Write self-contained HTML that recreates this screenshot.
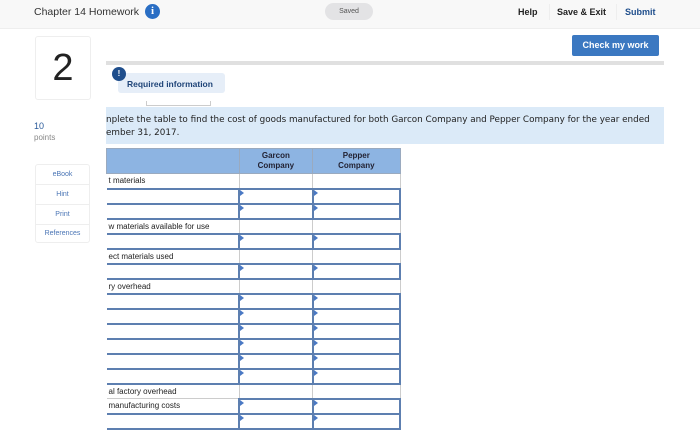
<!DOCTYPE html>
<html><head><meta charset="utf-8"><style>
*{margin:0;padding:0;box-sizing:border-box}
body{width:700px;height:438px;background:#fff;font-family:"Liberation Sans",Arial,sans-serif;position:relative;overflow:hidden;color:#333}
.a{position:absolute}
table{border-collapse:collapse;position:absolute;left:106px;top:148px;width:295px;font-size:8px}
td{height:15px;padding:0 0 0 2px;vertical-align:middle;color:#222;white-space:nowrap;overflow:hidden}
th{background:#8db4e2;height:25px;font-size:8px;color:#223;font-weight:bold;border:1px solid #9aaabf;line-height:10px}
tr.l td{border:1px solid #ccc}
tr td:first-child{border-left:none !important}
tr.i td{border-top:2px solid #5d7fb0;border-bottom:2px solid #5d7fb0}
tr.i td.c{border:2px solid #5d7fb0;position:relative}
tr.i td.c:before{content:"";position:absolute;left:0;top:0;border-left:4px solid #4a79c4;border-top:3px solid transparent;border-bottom:3px solid transparent}
</style></head><body>
<div class="a" style="left:0;top:0;width:700px;height:29px;background:#f8f8f8;border-bottom:1px solid #eee"></div>
<div class="a" style="left:34px;top:6px;font-size:10.5px;color:#333">Chapter 14 Homework</div>
<div class="a" style="left:145px;top:4px;width:15px;height:15px;border-radius:50%;background:#2a6ec4;color:#fff;font-weight:bold;font-size:11px;text-align:center;line-height:15px;font-family:'Liberation Serif',serif">i</div>
<div class="a" style="left:325px;top:3px;width:48px;height:17px;border-radius:9px;background:#e3e3e5;font-size:7px;color:#555;text-align:center;line-height:17px">Saved</div>
<div class="a" style="left:518px;top:7px;font-size:9px;font-weight:bold;color:#222">Help</div>
<div class="a" style="left:549px;top:4px;width:1px;height:16px;background:#eee"></div>
<div class="a" style="left:557px;top:7px;font-size:9px;font-weight:bold;color:#222">Save &amp; Exit</div>
<div class="a" style="left:616px;top:4px;width:1px;height:16px;background:#eee"></div>
<div class="a" style="left:625px;top:7px;font-size:9px;font-weight:bold;color:#1f4e8c">Submit</div>
<div class="a" style="left:572px;top:35px;width:87px;height:21px;background:#3b78c1;border-radius:2px;color:#fff;font-size:9px;font-weight:bold;text-align:center;line-height:21px">Check my work</div>
<div class="a" style="left:35px;top:36px;width:56px;height:64px;border:1px solid #eee;border-radius:3px;font-size:38px;text-align:center;line-height:62px;color:#222">2</div>
<div class="a" style="left:34px;top:121px;font-size:9px;color:#2a5a9a">10</div>
<div class="a" style="left:34px;top:133px;font-size:8px;color:#888">points</div>
<div class="a" style="left:35px;top:164px;width:55px;height:79px;border:1px solid #eee;border-radius:3px;font-size:7px;color:#4a75b5;text-align:center">
<div style="height:20px;line-height:20px;border-bottom:1px solid #eee">eBook</div>
<div style="height:20px;line-height:20px;border-bottom:1px solid #eee">Hint</div>
<div style="height:20px;line-height:20px;border-bottom:1px solid #eee">Print</div>
<div style="height:18px;line-height:18px">References</div></div>
<div class="a" style="left:106px;top:61px;width:558px;height:4px;background:#e0e0e0"></div>
<div class="a" style="left:118px;top:73px;width:107px;height:20px;background:#e6eef8;border-radius:3px;font-size:8.5px;font-weight:bold;color:#1f4478;padding:6px 0 0 9px">Required information</div>
<div class="a" style="left:112px;top:67px;width:14px;height:14px;border-radius:50%;background:#1f4e8c;color:#fff;font-size:8px;font-weight:bold;text-align:center;line-height:14px">!</div>
<div class="a" style="left:146px;top:101px;width:65px;height:5px;border:1px solid #ccc;border-top:none"></div>
<div class="a" style="left:106px;top:107px;width:558px;height:37px;background:#dbeaf8;color:#222;padding:7px 0 0 0;line-height:13px;font-family:'DejaVu Sans',sans-serif;font-size:8.8px;white-space:nowrap;overflow:hidden">nplete the table to find the cost of goods manufactured for both Garcon Company and Pepper Company for the year ended<br>ember 31, 2017.</div>
<table>
<tr><th style="width:133px"></th><th style="width:74px">Garcon<br>Company</th><th style="width:88px">Pepper<br>Company</th></tr>
<tr class="l"><td>t materials</td><td></td><td></td></tr>
<tr class="i"><td></td><td class="c"></td><td class="c"></td></tr>
<tr class="i"><td></td><td class="c"></td><td class="c"></td></tr>
<tr class="l"><td>w materials available for use</td><td></td><td></td></tr>
<tr class="i"><td></td><td class="c"></td><td class="c"></td></tr>
<tr class="l"><td>ect materials used</td><td></td><td></td></tr>
<tr class="i"><td></td><td class="c"></td><td class="c"></td></tr>
<tr class="l"><td>ry overhead</td><td></td><td></td></tr>
<tr class="i"><td></td><td class="c"></td><td class="c"></td></tr>
<tr class="i"><td></td><td class="c"></td><td class="c"></td></tr>
<tr class="i"><td></td><td class="c"></td><td class="c"></td></tr>
<tr class="i"><td></td><td class="c"></td><td class="c"></td></tr>
<tr class="i"><td></td><td class="c"></td><td class="c"></td></tr>
<tr class="i"><td></td><td class="c"></td><td class="c"></td></tr>
<tr class="l"><td>al factory overhead</td><td></td><td></td></tr>
<tr class="i"><td style="border-top:1px solid #ccc;border-bottom:none">manufacturing costs</td><td class="c"></td><td class="c"></td></tr>
<tr class="i"><td></td><td class="c"></td><td class="c"></td></tr>
</table>
</body></html>
